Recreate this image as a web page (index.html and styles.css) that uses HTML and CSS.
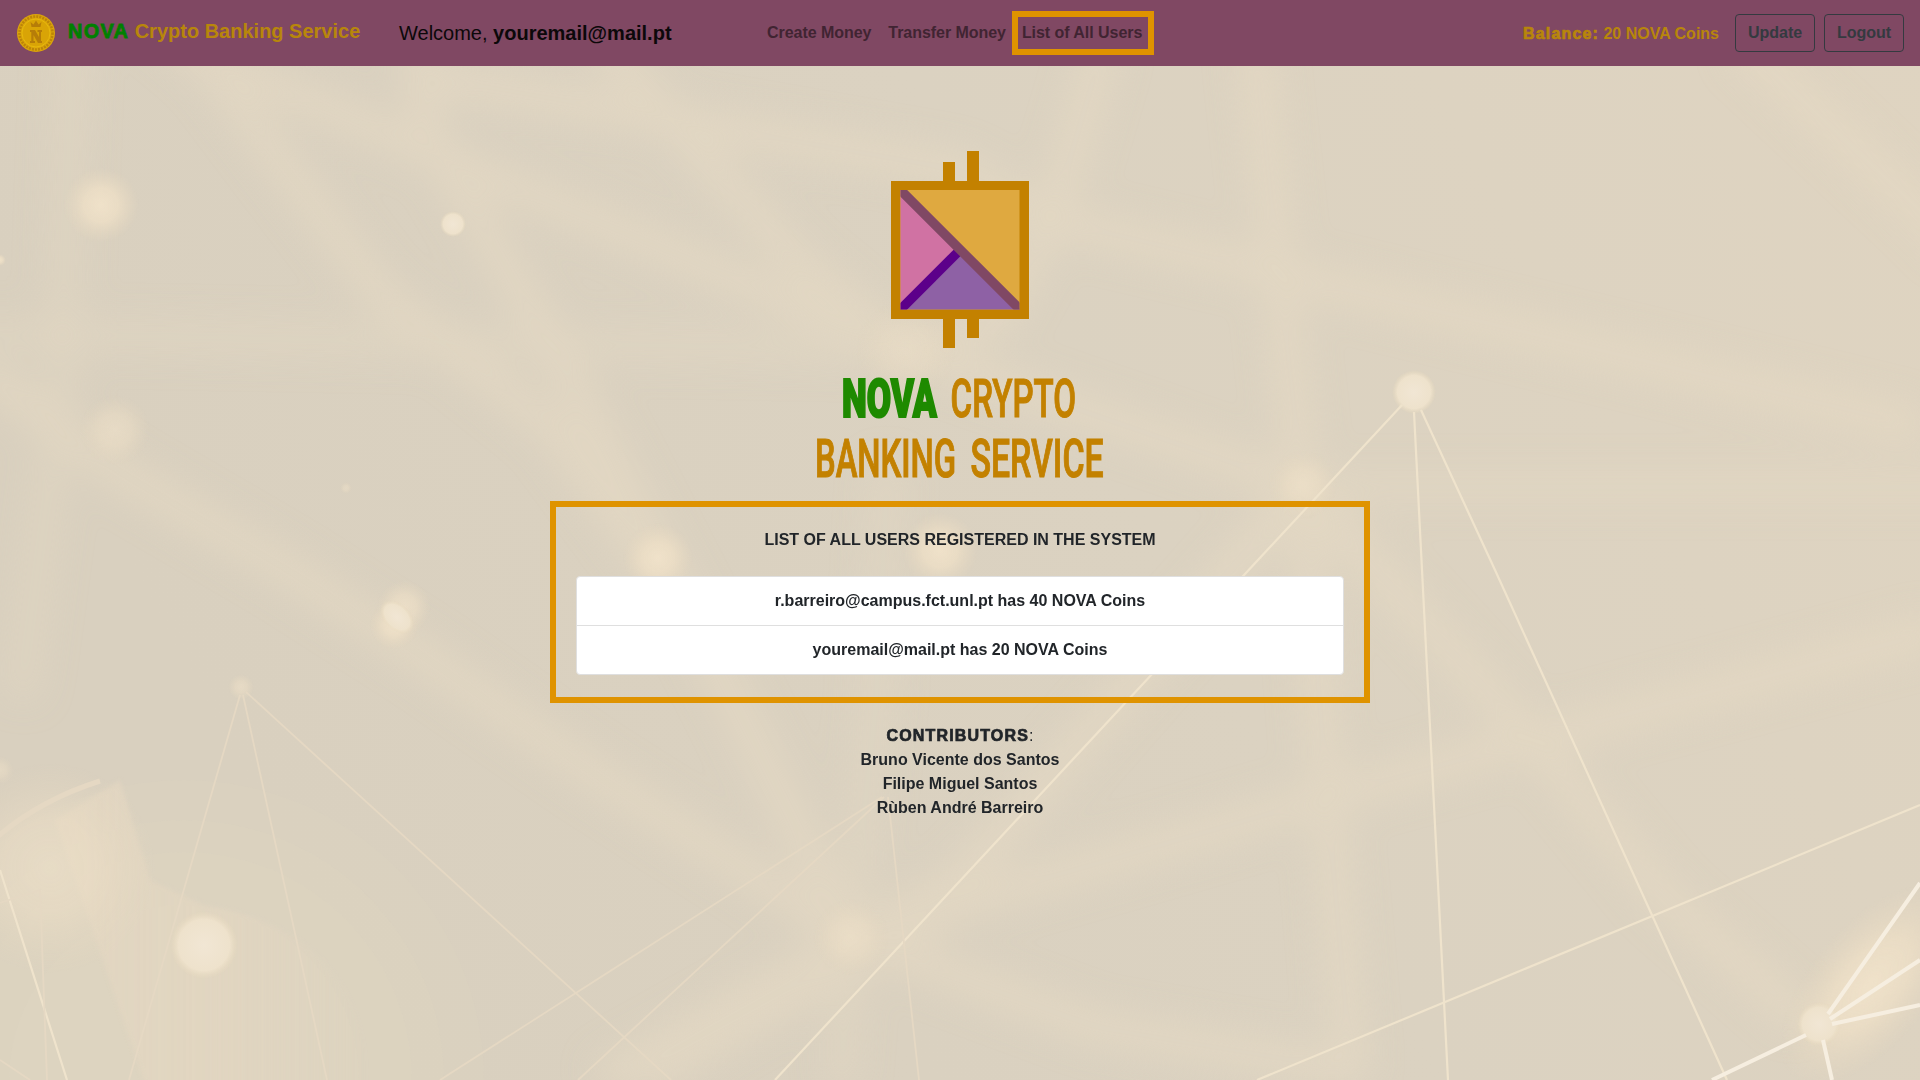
FILE: index.html
```
<!DOCTYPE html>
<html lang="en">
<head>
<meta charset="utf-8">
<title>NOVA Crypto Banking Service</title>
<link rel="stylesheet" href="styles.css">
</head>
<body>
<svg class="backdrop" viewBox="0 0 1920 1080" aria-hidden="true">
  <defs>
    <linearGradient id="base" x1="0" x2="1" y1="0.3" y2="0">
      <stop offset="0" stop-color="#d9d0bf"/>
      <stop offset="0.5" stop-color="#dbd2c1"/>
      <stop offset="1" stop-color="#dfd4c1"/>
    </linearGradient>
    <radialGradient id="glow">
      <stop offset="0" stop-color="#efe1c9"/>
      <stop offset="0.45" stop-color="#ebddc5" stop-opacity="0.9"/>
      <stop offset="1" stop-color="#e6d8c0" stop-opacity="0"/>
    </radialGradient>
    <radialGradient id="disc">
      <stop offset="0" stop-color="#f1e6d4"/>
      <stop offset="0.75" stop-color="#eee2cc"/>
      <stop offset="1" stop-color="#e9dbbf" stop-opacity="0"/>
    </radialGradient>
    <linearGradient id="fade" x1="0" x2="1" y1="0" y2="0">
      <stop offset="0" stop-color="#e3d6c1"/>
      <stop offset="0.5" stop-color="#e3d6c1" stop-opacity=".8"/>
      <stop offset="1" stop-color="#e3d6c1" stop-opacity="0"/>
    </linearGradient>
    <filter id="soft" filterUnits="userSpaceOnUse" x="-60" y="-60" width="2040" height="1200"><feGaussianBlur stdDeviation="17"/></filter>
    <filter id="edge"><feGaussianBlur stdDeviation="2"/></filter>
  </defs>
  <rect width="1920" height="1080" fill="url(#base)"/>
  <g class="bands" filter="url(#soft)">
    <path d="M80 -40L210 67 380 293 551 427 670 590"/>
    <path d="M190 50L465 167 643 240 906 350 1303 487"/>
    <path d="M416 40L429 137 551 343 612 460 735 703 851 937"/>
    <path d="M600 40L692 143 796 260 906 350"/>
    <path d="M429 77L960 170 1052 220 1266 270 1920 427"/>
    <path class="dim" d="M-40 333L906 350"/>
    <path d="M-20 370L116 470 288 570 429 660 588 770 851 937 1095 1027 1352 1070"/>
    <path d="M1105 40L1052 220 997 320 906 350"/>
    <path d="M1254 40L1285 327 1303 487 1327 797 1352 1080"/>
    <path d="M1738 40L1920 210 1960 250"/>
    <path d="M1303 487L960 880 600 1080"/>
    <path d="M1303 487L1376 570 1542 750 1664 897 1805 1020"/>
    <path d="M640 1080L960 903 1327 797 1542 737 1940 630"/>
    <path class="dim" d="M888 460L876 703 851 937 840 1090"/>
    <path class="dim" d="M75 -40L60 400 20 700"/>
    <path class="dim" d="M1303 487H1960"/>
  </g>
  <g class="rings">
    <circle cx="184" cy="1080" r="300"/>
    <circle cx="184" cy="1080" r="260"/>
    <circle cx="184" cy="1080" r="228"/>
    <circle cx="184" cy="1080" r="175"/>
  </g>
  <path class="wedge" filter="url(#edge)" d="M55 820L147 1090H370Q365 930 204 905L150 880 120 780Z"/>
  <circle cx="50" cy="868" r="105" fill="url(#glow)" opacity=".6"/>
  <g fill="url(#glow)">
    <circle cx="101" cy="205" r="38"/>
    <circle cx="115" cy="430" r="35" opacity=".6"/>
    <circle cx="346" cy="488" r="6" opacity=".5"/>
    <circle cx="0" cy="260" r="6"/>
    <circle cx="0" cy="770" r="14" opacity=".5"/>
    <circle cx="658" cy="558" r="35"/>
    <circle cx="940" cy="550" r="38"/>
    <circle cx="851" cy="937" r="38" opacity=".6"/>
    <circle cx="906" cy="350" r="50" opacity=".4"/>
    <circle cx="1303" cy="485" r="34" opacity=".7"/>
    <circle cx="404" cy="607" r="27" opacity=".8"/>
    <circle cx="394" cy="625" r="24"/>
    <circle cx="241" cy="687" r="13" opacity=".6"/>
    <ellipse cx="1870" cy="985" rx="120" ry="60" transform="rotate(-50 1870 985)"/>
  </g>
  <g fill="url(#disc)">
    <circle cx="453" cy="224" r="13"/>
    <circle cx="204" cy="945" r="34"/>
    <circle cx="1414" cy="392" r="22"/>
    <circle cx="1819" cy="1024" r="22"/>
    <ellipse cx="397" cy="617" rx="13" ry="20" transform="rotate(-45 397 617)"/>
  </g>
  <g class="threads">
    <path d="M1402 405L775 1080M1414 412L1422 570 1448 1080M1421 410L1495 570 1727 1080M1920 805L1257 1080M0 870L67 1080"/>
  </g>
  <g class="threads faint">
    <path d="M240 695L129 1080M243 695L327 1080M246 692L671 1080M882 797L440 1080M884 797L578 1080M888 797L919 1080M0 903L40 890 47 1080M0 1060L30 1080"/>
    <path class="arc" d="M-4 838Q40 800 100 781"/>
  </g>
  <g class="threads bright">
    <path d="M1828 1014L1920 883M1830 1019L1920 960M1832 1024L1920 1005M1806 1035L1712 1080M1823 1040L1832 1080"/>
  </g>
</svg>

<header class="navbar">
  <a class="brand">
    <svg class="coin" viewBox="0 0 38 38">
      <circle cx="19" cy="19" r="19" fill="#dba50a"/>
      <circle cx="19" cy="19" r="16.500" fill="none" stroke="#bd8508" stroke-width="2.600" stroke-dasharray="2 1.100"/>
      <circle cx="19" cy="19" r="14" fill="#d9a406" stroke="#e8b90c" stroke-width="1"/>
      <path d="M13.500 8l3 2.500L19 6.500l2.500 4L24.500 8l-1 5h-9zM13 16h5l4 7v-5h-1.500v-2H25v2h-1v9h1v2h-4l-4.500-8v6H18v2h-5v-2h1.300v-9H13z" fill="#b67d08"/>
    </svg>
    <span class="brand-name"><b class="nova">NOVA</b> Crypto Banking Service</span>
  </a>
  <div class="welcome">Welcome, <b>youremail@mail.pt</b></div>
  <nav class="links">
    <a>Create Money</a>
    <a>Transfer Money</a>
    <a class="current">List of All Users</a>
  </nav>
  <div class="account">
    <span class="balance"><span class="heavy">Balance:</span> 20 NOVA Coins</span>
    <button class="btn">Update</button>
    <button class="btn">Logout</button>
  </div>
</header>

<main class="page">
  <svg class="logo" viewBox="0 0 320 350">
    <defs><clipPath id="inner"><rect x="100.500" y="50" width="119" height="119.500"/></clipPath></defs>
    <path d="M143 22h12v20h-12zM167 11h12v31h-12zM143 178h12v30h-12zM167 178h12v20h-12zM91 41h138v138H91z" fill="#c38100"/>
    <g clip-path="url(#inner)">
      <rect x="100" y="49" width="121" height="121" fill="#dfa940"/>
      <path d="M100 49L160 110 100 170z" fill="#d072a3"/>
      <path d="M100 170L160 110 221 170z" fill="#8e61a5"/>
      <path d="M98 172L158 112" stroke="#5c008a" stroke-width="9.500"/>
      <path d="M98 47.500L222 171.500" stroke="#804864" stroke-width="9.500"/>
    </g>
    <g class="logo-text" transform="scale(.6 1)">
      <text class="logo-nova" x="70" y="277.500" textLength="158" lengthAdjust="spacingAndGlyphs">NOVA</text>
      <text x="251" y="277.500" textLength="209" lengthAdjust="spacingAndGlyphs">CRYPTO</text>
      <text x="25" y="337" textLength="235" lengthAdjust="spacingAndGlyphs">BANKING</text>
      <text x="284" y="337" textLength="222" lengthAdjust="spacingAndGlyphs">SERVICE</text>
    </g>
  </svg>

  <section class="panel">
    <h1 class="panel-title">LIST OF ALL USERS REGISTERED IN THE SYSTEM</h1>
    <ul class="users">
      <li>r.barreiro@campus.fct.unl.pt has 40 NOVA Coins</li>
      <li>youremail@mail.pt has 20 NOVA Coins</li>
    </ul>
  </section>

  <footer class="contributors">
    <div class="colon"><span class="heavy">CONTRIBUTORS</span>:</div>
    <div>Bruno Vicente dos Santos</div>
    <div>Filipe Miguel Santos</div>
    <div>Rùben André Barreiro</div>
  </footer>
</main>
</body>
</html>
```
FILE: styles.css
```
* { box-sizing: border-box; }

body {
  margin: 0;
  height: 1080px;
  overflow: hidden;
  background: #dcd2c0;
  color: #212529;
  font: 700 16px/24px "Liberation Sans", Arial, sans-serif;
}

.backdrop {
  position: fixed;
  inset: 0;
  width: 1920px;
  height: 1080px;
  z-index: -1;
}
.bands { fill: none; stroke: #e6dac4; stroke-width: 36; opacity: .6; }
.bands .dim { opacity: .6; }
.rings circle { fill: #e2d6c3; fill-opacity: .13; }
.wedge { fill: url(#fade); opacity: .8; }
.threads { fill: none; stroke: #efe3cc; stroke-width: 2.2; }
.threads.faint { stroke: #e5d8c3; stroke-width: 1.8; }
.threads.faint .arc { stroke-width: 5; }
.threads.bright { stroke: #f6eee0; stroke-width: 4; }

/* Navigation bar */
.navbar {
  height: 66px;
  padding: 0 16px 0 17px;
  display: flex;
  align-items: center;
  background: #804863;
}
.brand {
  width: 382px;
  display: flex;
  align-items: center;
  gap: 13px;
  color: #b8860b;
  font-size: 20px;
}
.coin { width: 38px; height: 38px; }
.brand-name { padding-bottom: 4px; white-space: nowrap; }
.nova { color: #008000; letter-spacing: 1.2px; -webkit-text-stroke: .8px #008000; }
.welcome {
  width: 368px;
  font-size: 20px;
  font-weight: 400;
  color: #0c080a;
}
.welcome b { font-weight: 700; }
.links {
  display: flex;
  align-items: center;
  gap: 17px;
  color: #402432;
  white-space: nowrap;
}
.links a { padding-bottom: 1px; letter-spacing: -.05px; }
.links .current {
  margin-left: -11px;
  width: 142px;
  height: 44px;
  padding-left: 4px;
  border: 6px solid #df9300;
  line-height: 31px;
}
.account {
  margin-left: auto;
  display: flex;
  align-items: center;
  gap: 9px;
}
.balance { color: #b8860b; margin-right: 7px; padding-top: 2px; white-space: nowrap; }
.heavy { letter-spacing: 1.15px; -webkit-text-stroke: .7px currentColor; }
.btn {
  width: 80px;
  height: 38px;
  padding: 0 0 1px;
  border: 1px solid #343a40;
  border-radius: 4px;
  background: none;
  color: #343a40;
  font: inherit;
}

/* Page content */
.page {
  padding-top: 74px;
  display: flex;
  flex-direction: column;
  align-items: center;
  text-align: center;
}
.logo { width: 320px; height: 350px; }
.logo-text {
  font: 500 54px Roboto, sans-serif;
  fill: #c38100;
  stroke: #c38100;
  stroke-width: 1.2px;
}
.logo-nova { font-weight: 900; fill: #1e8a00; stroke: #1e8a00; stroke-width: 2.2px; }
.panel {
  width: 820px;
  height: 202px;
  margin-top: 11px;
  padding: 21px 20px 0;
  border: 6px solid #df9300;
}
.panel-title { margin: 0 0 24px; font: inherit; }
.users {
  margin: 0;
  padding: 0;
  list-style: none;
  background: #fff;
  border: 1px solid #dfdfdf;
  border-radius: 4px;
}
.users li { height: 48px; padding-top: 12px; }
.users li + li { height: 49px; border-top: 1px solid #dfdfdf; }
.contributors { margin-top: 21px; }
.colon { font-weight: 300; }
.colon .heavy { font-weight: 700; }
```
